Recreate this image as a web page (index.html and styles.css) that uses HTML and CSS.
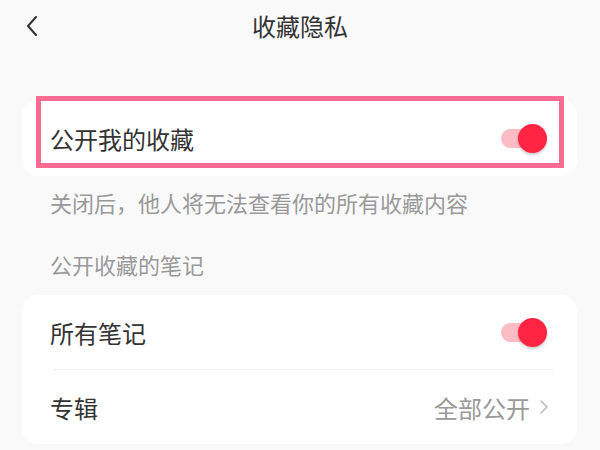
FILE: index.html
```html
<!DOCTYPE html>
<html lang="zh-CN">
<head>
    <meta charset="UTF-8">
    <meta name="viewport" content="width=device-width, initial-scale=1.0">
    <title>收藏隐私</title>
    <link rel="stylesheet" href="styles.css">
</head>
<body>
    <div class="page">
        <div class="header">
            <span class="back">
                <svg width="12" height="20" viewBox="0 0 12 20">
                    <path d="M10 1 L2 10 L10 19" fill="none" stroke="#333" stroke-width="2" stroke-linecap="round" stroke-linejoin="round"/>
                </svg>
            </span>
            <h1>收藏隐私</h1>
        </div>

        <div class="card first">
            <div class="row">
                <span class="label">公开我的收藏</span>
                <span class="switch on"><span class="knob"></span></span>
            </div>
            <div class="highlight"></div>
        </div>

        <p class="hint">关闭后，他人将无法查看你的所有收藏内容</p>
        <p class="section">公开收藏的笔记</p>

        <div class="card">
            <div class="row">
                <span class="label">所有笔记</span>
                <span class="switch on"><span class="knob"></span></span>
            </div>
            <div class="divider"></div>
            <div class="row">
                <span class="label">专辑</span>
                <span class="value">全部公开
                    <svg width="10" height="16" viewBox="0 0 10 16">
                        <path d="M2 2 L8 8 L2 14" fill="none" stroke="#bbb" stroke-width="1.6" stroke-linecap="round" stroke-linejoin="round"/>
                    </svg>
                </span>
            </div>
        </div>
    </div>
</body>
</html>
```

FILE: styles.css
```css
body {
    margin: 0;
    padding: 0;
    background-color: #f9f9f9;
    font-family: "Noto Sans CJK SC", "Noto Sans", sans-serif;
    color: #333;
}
.page {
    width: 600px;
    height: 450px;
    overflow: hidden;
}
.header {
    height: 50px;
    display: flex;
    align-items: center;
    justify-content: center;
    position: relative;
}
.header h1 {
    margin: 0;
    font-size: 24px;
    font-weight: normal;
    color: #333;
}
.back {
    position: absolute;
    left: 26px;
    top: 16px;
    display: flex;
}
.card {
    margin: 0 23px 0 22px;
    background: #fff;
    border-radius: 16px;
    position: relative;
}
.card.first {
    margin-top: 50px;
}
.row {
    height: 74px;
    display: flex;
    align-items: center;
    justify-content: space-between;
    padding: 0 28px 0 28px;
}
.card.first .row {
    height: 76px;
}
.label {
    font-size: 24px;
    color: #333;
}
.switch {
    position: relative;
    width: 40px;
    height: 19px;
    border-radius: 10px;
    background: #fbbcc6;
    margin-right: 8px;
}
.knob {
    position: absolute;
    right: -6px;
    top: -5px;
    width: 29px;
    height: 29px;
    border-radius: 50%;
    background: #ff2442;
    box-shadow: 0 2px 3px rgba(0, 0, 0, 0.2);
}
.highlight {
    position: absolute;
    left: 14px;
    top: -4px;
    width: 518px;
    height: 62px;
    border: 5px solid #f86b93;
}
.hint, .section {
    margin: 0;
    padding-left: 50px;
    font-size: 22px;
    color: #999;
}
.hint {
    margin-top: 11px;
    line-height: 30px;
}
.section {
    margin-top: 32px;
    line-height: 30px;
    margin-bottom: 16px;
}
.divider {
    height: 1px;
    background: #eee;
    margin: 0 24px 0 31px;
}
.value {
    display: flex;
    align-items: center;
    gap: 9px;
    font-size: 24px;
    color: #999;
}
```
